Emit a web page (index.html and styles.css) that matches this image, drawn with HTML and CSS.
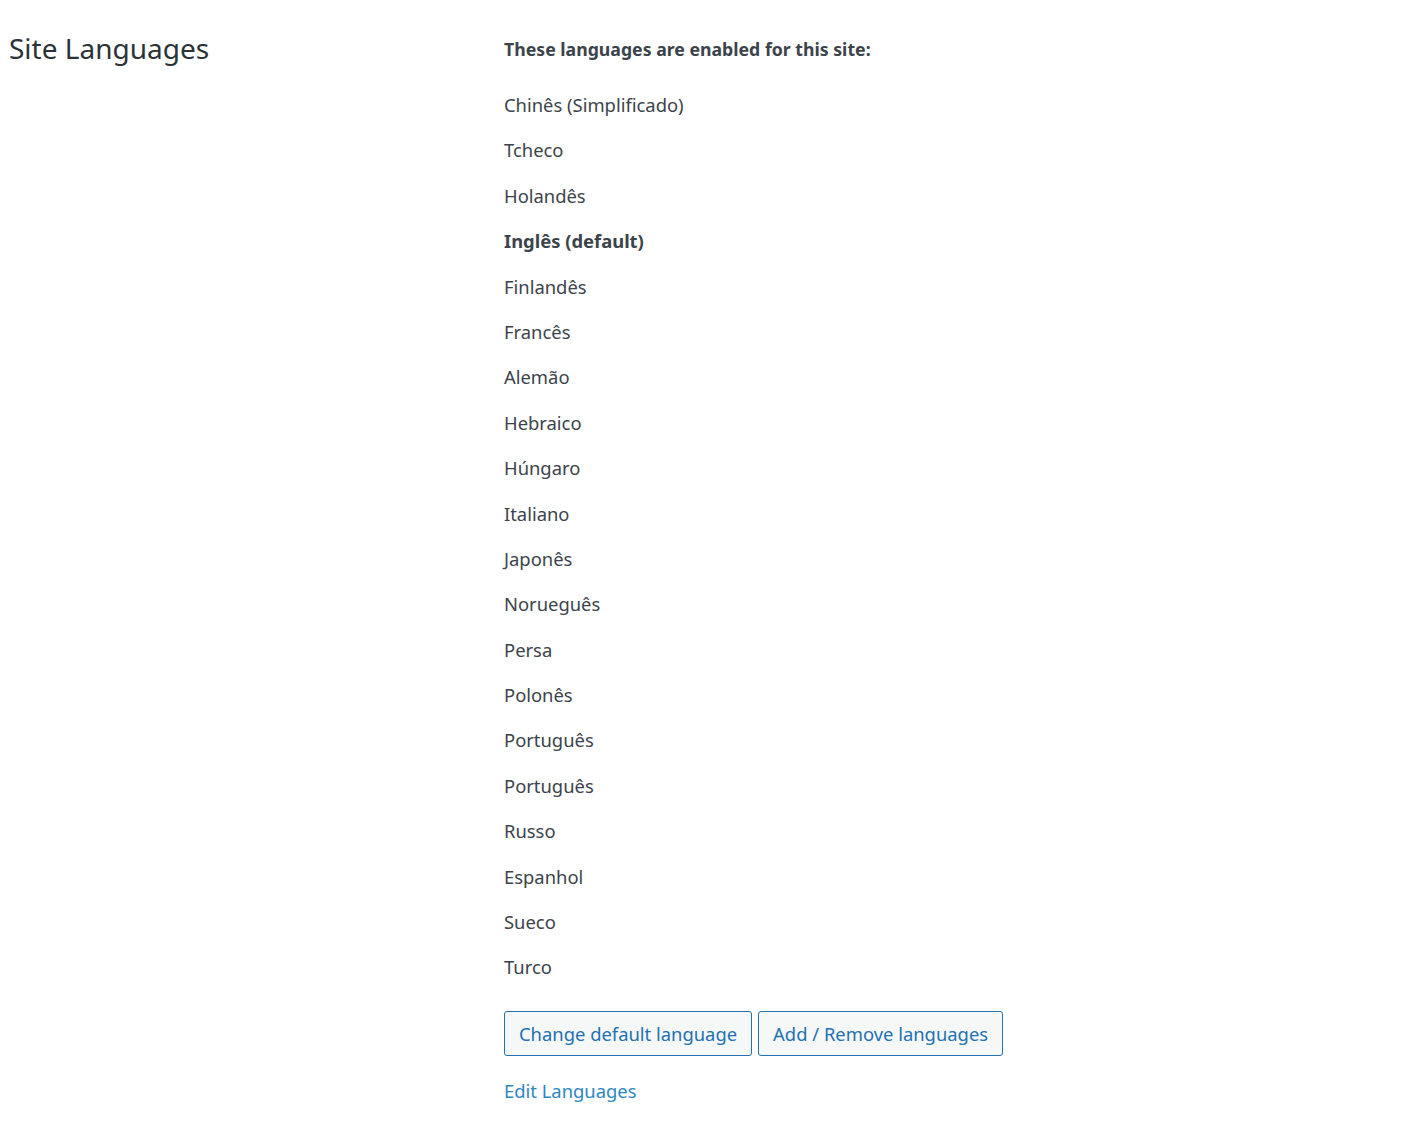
FILE: index.html
```html
<!DOCTYPE html>
<html>
<head>
<meta charset="utf-8">
<title>Site Languages</title>
<link rel="stylesheet" href="styles.css">
</head>
<body>
	<div class="settings_row">
		<h2 class="row_title">Site Languages</h2>
		<div class="row_content">
			<p class="enabled_label">These languages are enabled for this site:</p>
			<ul class="lang_list">
				<li>Chinês (Simplificado)</li>
				<li>Tcheco</li>
				<li>Holandês</li>
				<li class="default_lang">Inglês (default)</li>
				<li>Finlandês</li>
				<li>Francês</li>
				<li>Alemão</li>
				<li>Hebraico</li>
				<li>Húngaro</li>
				<li>Italiano</li>
				<li>Japonês</li>
				<li>Norueguês</li>
				<li>Persa</li>
				<li>Polonês</li>
				<li>Português</li>
				<li>Português</li>
				<li>Russo</li>
				<li>Espanhol</li>
				<li>Sueco</li>
				<li>Turco</li>
			</ul>
			<div class="button_row">
				<button type="button" class="wp_button">Change default language</button>
				<button type="button" class="wp_button">Add / Remove languages</button>
			</div>
			<a href="#" class="edit_link">Edit Languages</a>
		</div>
	</div>
</body>
</html>
```

FILE: styles.css
```css
body {
	margin:0;
	background:#fff;
	color:#3c434a;
	font-family:"Noto Sans", "Open Sans", sans-serif;
	font-size:18.4px;
}
.settings_row {
	display:grid;
	grid-template-columns:504px 1fr;
	padding-top:28px;
}
.row_title {
	margin:0 0 0 9px;
	font-size:28px;
	font-weight:400;
	color:#2c3338;
	line-height:40px;
}
.row_content {
	padding-top:8px;
}
.enabled_label {
	margin:0;
	font-size:17.7px;
	font-weight:700;
	line-height:26px;
}
.lang_list {
	list-style:none;
	margin:30px 0 0 0;
	padding:0;
}
.lang_list li {
	height:45.4px;
	line-height:26px;
}
.lang_list .default_lang {
	font-weight:700;
}
.button_row {
	display:flex;
	gap:6px;
	margin-top:11px;
}
.wp_button {
	font-family:inherit;
	font-size:18.4px;
	color:#2271b1;
	background:#f6f7f7;
	border:1px solid #2271b1;
	border-radius:3px;
	height:45px;
	padding:0 14px;
	cursor:pointer;
}
.edit_link {
	display:inline-block;
	margin-top:22px;
	color:#2e86c1;
	text-decoration:none;
}
```
